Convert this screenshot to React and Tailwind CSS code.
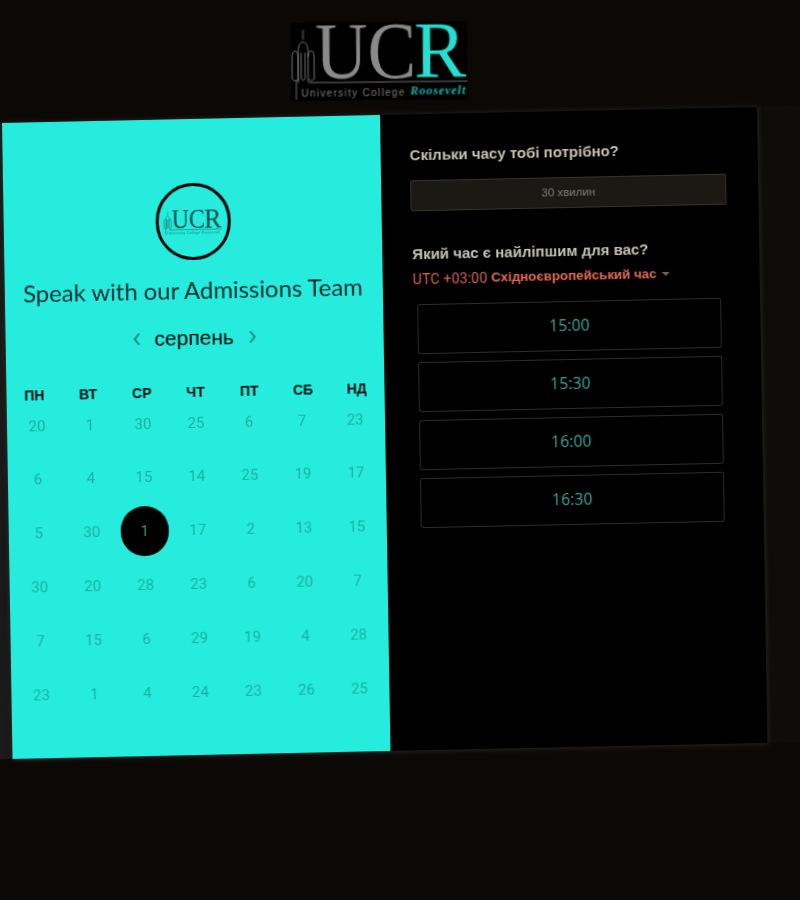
const dayNames = ["ПН", "ВТ", "СР", "ЧТ", "ПТ", "СБ", "НД"];
const days = [
  [20, 1, 30, 25, 6, 7, 23],
  [6, 4, 15, 14, 25, 19, 17],
  [5, 30, 1, 17, 2, 13, 15],
  [30, 20, 28, 23, 6, 20, 7],
  [7, 15, 6, 29, 19, 4, 28],
  [23, 1, 4, 24, 23, 26, 25],
];
const times = ["15:00", "15:30", "16:00", "16:30"];

function Tower({ stroke, w = 0.8 }) {
  return (
    <path
      fill="none"
      stroke={stroke}
      strokeWidth={w}
      d="M12 7V17M7 29q0-9 5-10q5 1 5 10M1 56V34q0-5 3-6q3 1 3 6v24M1 56q3 4 6 0M7 29V60M17 29V60M10 30v26q2 3 4 0V30M17 34q0-5 3-6q3 1 3 6v22q-3 4-6 0M5 58V77"
    />
  );
}

function Logo() {
  return (
    <svg width="176" height="78" viewBox="0 0 176 78" className="block overflow-visible rotate-[0.6deg]">
      <rect width="176" height="78" fill="#000" />
      <Tower stroke="#8a8a8a" />
      <text x="24" y="56" fontFamily="Liberation Serif" fontSize="80" fill="#8c8a88" textLength="101" lengthAdjust="spacingAndGlyphs">UC</text>
      <text x="123" y="56" fontFamily="Liberation Serif" fontSize="80" fill="#25dfd0" textLength="52" lengthAdjust="spacingAndGlyphs">R</text>
      <path d="M18 60H176" stroke="#77736f" strokeWidth="1" />
      <text x="10" y="73.5" fontFamily="Liberation Sans" fontSize="10" fill="#7f7c79" textLength="103">University College</text>
      <text x="119" y="73" fontFamily="Liberation Serif" fontSize="12" fontWeight="700" fontStyle="italic" fill="#1fb5aa" textLength="55">Roosevelt</text>
    </svg>
  );
}

function SmallLogo() {
  return (
    <svg width="58" height="26" viewBox="0 0 176 78" className="block overflow-visible">
      <Tower stroke="#168a84" w={2} />
      <text x="24" y="56" fontFamily="Liberation Serif" fontSize="80" fill="#0a4a4c" textLength="101" lengthAdjust="spacingAndGlyphs">UC</text>
      <text x="123" y="56" fontFamily="Liberation Serif" fontSize="80" fill="#0a4a4c" textLength="52" lengthAdjust="spacingAndGlyphs">R</text>
      <path d="M18 62H176" stroke="#12807c" strokeWidth="2" />
      <text x="10" y="76" fontFamily="Liberation Sans" fontSize="11" fill="#128a84" textLength="160">University College Roosevelt</text>
    </svg>
  );
}

function Chevron({ d }) {
  return (
    <svg width="10" height="14" viewBox="0 0 10 14" fill="none" stroke="#1a8f8a" strokeWidth="2" strokeLinecap="round" strokeLinejoin="round">
      <path d={d} />
    </svg>
  );
}

export default function App() {
  return (
    <div className="w-[800px] h-[900px] overflow-hidden bg-[#0b0806]">
      <div className="w-[800px] origin-top-left [transform:matrix(1,-0.0212,0.0165,1,0,0)] blur-[0.45px] pt-[28px]">
        <div className="flex justify-center h-[80px] pt-[2px] pr-[45px] mb-[15px]">
          <Logo />
        </div>
        <div className="w-[860px] -ml-[30px] pl-[30px] bg-gradient-to-r from-[#1c1e1e] via-[#0f0d0a] via-[10%] to-[#0f0d0a]">
          <div className="flex w-[755px] h-[636px] bg-black shadow-[0_0_5px_rgba(70,65,60,0.5)] rounded-r-[2px]">
            <div className="w-[378px] shrink-0 bg-[#25ecdc] flex flex-col items-center pt-[64px]">
              <div className="w-[75px] h-[77px] rounded-full border-[3px] border-black flex items-center justify-center">
                <SmallLogo />
              </div>
              <div className="mt-[14px] -ml-[2px] text-[24px] leading-[32px] text-[#083033] font-['Lato',sans-serif] tracking-[-0.07px] whitespace-nowrap">
                Speak with our Admissions Team
              </div>
              <div className="mt-[17px] -ml-[1px] flex items-center h-[30px] font-['Liberation_Sans',sans-serif]">
                <Chevron d="M7 2 3 7l4 5" />
                <div className="w-[106px] text-center text-[21px] leading-[30px] text-black">серпень</div>
                <Chevron d="M3 2l4 5-4 5" />
              </div>
              <div className="mt-[31px] w-[376px] grid grid-cols-7 font-['Liberation_Sans',sans-serif]">
                {dayNames.map((d) => (
                  <div key={d} className="h-[16px] text-center text-[14px] leading-[16px] font-bold text-[#020f0f]">
                    {d}
                  </div>
                ))}
              </div>
              <div className="-mt-[4px] w-[371px] grid grid-cols-7 font-['Roboto',sans-serif]">
                {days.flat().map((n, i) => (
                  <div key={i} className="h-[53.8px] flex items-center justify-center">
                    {i === 16 ? (
                      <div className="w-[48px] h-[50px] rounded-full bg-black flex items-center justify-center text-[14px] text-[#3a9a7a]">
                        {n}
                      </div>
                    ) : (
                      <span className="text-[15px] text-[#1cb0a5]">{n}</span>
                    )}
                  </div>
                ))}
              </div>
            </div>
            <div className="flex-1 pl-[29px] pt-[31px] font-['Liberation_Sans',sans-serif]">
              <div className="text-[15px] leading-[20px] font-bold text-[#c9c0b1]">Скільки часу тобі потрібно?</div>
              <div className="mt-[15px] w-[316px] h-[31px] rounded-[2px] border border-[#38322b] bg-[#1c1814] flex items-center justify-center text-[11.5px] text-[#857d72]">
                30 хвилин
              </div>
              <div className="mt-[33px] ml-px text-[15px] leading-[20px] font-bold text-[#c9c0b1]">Який час є найліпшим для вас?</div>
              <div className="mt-[6px] ml-[1px] flex items-center leading-[18px]">
                <span className="text-[14px] text-[#d8654f] font-['Roboto',sans-serif] tracking-[0.2px]">UTC +03:00&nbsp;</span>
                <span className="text-[13.3px] font-bold text-[#e56c55]">Східноєвропейський час</span>
                <span className="ml-[5px] w-0 h-0 border-x-[4px] border-x-transparent border-t-[4px] border-t-[#6f6259]" />
              </div>
              <div className="mt-[16px] ml-[5px] flex flex-col gap-[8px] w-[304px]">
                {times.map((t) => (
                  <div key={t} className="h-[50px] rounded-[3px] border border-[#2e2c28] flex items-center justify-center text-[15.5px] tracking-[0.2px] text-[#3ea8a0] font-['Open_Sans',sans-serif] font-normal">
                    {t}
                  </div>
                ))}
              </div>
            </div>
          </div>
        </div>
      </div>
    </div>
  );
}
